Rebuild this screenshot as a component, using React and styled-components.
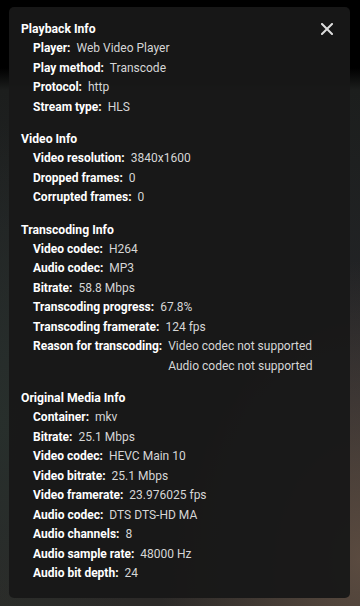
import React from 'react';
import styled, { createGlobalStyle } from 'styled-components';

const GlobalStyle = createGlobalStyle`
  html, body {
    margin: 0;
    padding: 0;
  }
  body {
    width: 360px;
    height: 606px;
    overflow: hidden;
    font-family: Roboto, "Noto Sans", "Liberation Sans", sans-serif;
    background:
      radial-gradient(ellipse 200px 300px at 360px 560px, rgba(95, 78, 66, 0.9), rgba(95, 78, 66, 0) 100%),
      radial-gradient(ellipse 160px 300px at 0px 420px, rgba(40, 48, 44, 0.9), rgba(40, 48, 44, 0) 100%),
      linear-gradient(180deg, #000 0px, #000 68px, #1c1e1d 90px, #25262a 400px, #2c2a28 606px);
  }
`;

const Panel = styled.div`
  position: relative;
  box-sizing: border-box;
  width: 341px;
  margin: 7px 0 0 9px;
  padding: 12px 12px 14px 12px;
  background: rgba(24, 24, 24, 0.96);
  border-radius: 5px;
  color: #fff;
`;

const CloseButton = styled.button`
  position: absolute;
  top: 13px;
  right: 14px;
  width: 18px;
  height: 18px;
  padding: 0;
  border: 0;
  background: transparent;
  color: #ddd;
  display: flex;
  align-items: center;
  justify-content: center;
  cursor: pointer;
`;

const Section = styled.section`
  & + & {
    margin-top: 12px;
  }
`;

const Heading = styled.h2`
  margin: 0;
  font-size: 12.2px;
  font-weight: 700;
  line-height: 20px;
  color: #fff;
`;

const Row = styled.div`
  display: flex;
  align-items: flex-start;
  gap: 6px;
  padding-left: 12px;
  font-size: 12px;
  line-height: 19.5px;
`;

const Label = styled.span`
  font-weight: 700;
  color: #fff;
  white-space: nowrap;
`;

const Values = styled.div`
  display: flex;
  flex-direction: column;
  color: #d6d6d6;
`;

const sections = [
  {
    title: 'Playback Info',
    rows: [
      ['Player', 'Web Video Player'],
      ['Play method', 'Transcode'],
      ['Protocol', 'http'],
      ['Stream type', 'HLS'],
    ],
  },
  {
    title: 'Video Info',
    rows: [
      ['Video resolution', '3840x1600'],
      ['Dropped frames', '0'],
      ['Corrupted frames', '0'],
    ],
  },
  {
    title: 'Transcoding Info',
    rows: [
      ['Video codec', 'H264'],
      ['Audio codec', 'MP3'],
      ['Bitrate', '58.8 Mbps'],
      ['Transcoding progress', '67.8%'],
      ['Transcoding framerate', '124 fps'],
      ['Reason for transcoding', ['Video codec not supported', 'Audio codec not supported']],
    ],
  },
  {
    title: 'Original Media Info',
    rows: [
      ['Container', 'mkv'],
      ['Bitrate', '25.1 Mbps'],
      ['Video codec', 'HEVC Main 10'],
      ['Video bitrate', '25.1 Mbps'],
      ['Video framerate', '23.976025 fps'],
      ['Audio codec', 'DTS DTS-HD MA'],
      ['Audio channels', '8'],
      ['Audio sample rate', '48000 Hz'],
      ['Audio bit depth', '24'],
    ],
  },
];

const App = () => (
  <>
    <GlobalStyle />
    <Panel>
      <CloseButton aria-label="Close">
        <svg width="12" height="12" viewBox="0 0 12 12">
          <path d="M1 1 L11 11 M11 1 L1 11" stroke="currentColor" strokeWidth="2" strokeLinecap="square" />
        </svg>
      </CloseButton>
      {sections.map((section) => (
        <Section key={section.title}>
          <Heading>{section.title}</Heading>
          {section.rows.map(([label, value]) => (
            <Row key={label}>
              <Label>{label}:</Label>
              <Values>
                {(Array.isArray(value) ? value : [value]).map((v) => (
                  <span key={v}>{v}</span>
                ))}
              </Values>
            </Row>
          ))}
        </Section>
      ))}
    </Panel>
  </>
);

export default App;
